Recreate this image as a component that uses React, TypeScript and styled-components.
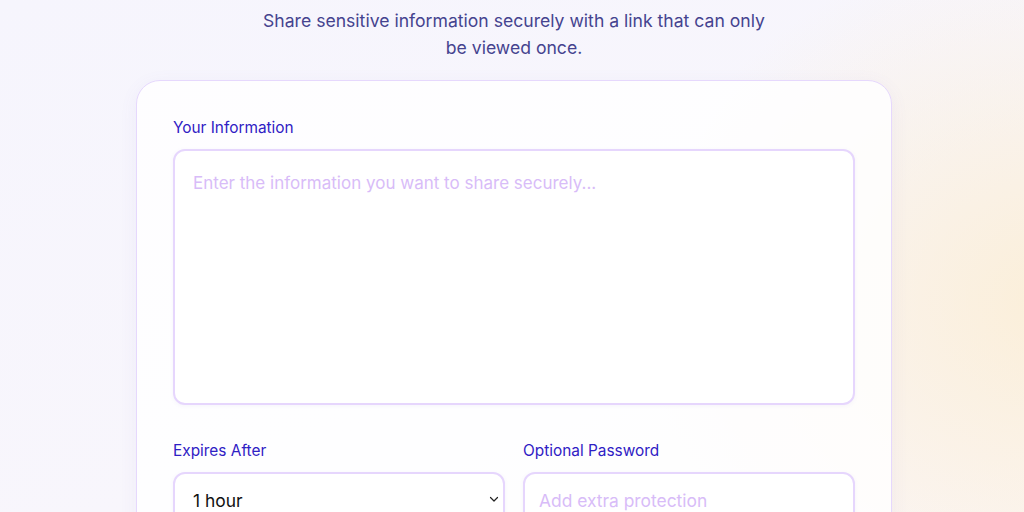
import React from "react";
import styled, { createGlobalStyle } from "styled-components";

const GlobalStyle = createGlobalStyle`
  html, body {
    margin: 0;
    padding: 0;
  }
  body {
    font-family: Inter, "Noto Sans", sans-serif;
    background:
      radial-gradient(ellipse 420px 360px at 1060px 300px, rgba(252, 236, 205, 0.75), rgba(252, 236, 205, 0) 100%),
      linear-gradient(160deg, #f6f5fd 0%, #f8f6fc 60%, #fbf6f6 100%);
    min-height: 512px;
    overflow: hidden;
  }
`;

const Page = styled.main`
  display: flex;
  flex-direction: column;
  align-items: center;
  padding: 7px 0 0 4px;
`;

const Intro = styled.p`
  margin: 0 0 19px;
  max-width: 520px;
  text-align: center;
  font-size: 17.6px;
  line-height: 27px;
  color: #45438f;
`;

const Card = styled.section`
  width: 756px;
  box-sizing: border-box;
  padding: 37px 36px 36px;
  background: rgba(255, 255, 255, 0.82);
  border: 1px solid #e6d8fd;
  border-radius: 24px;
  box-shadow: 0 4px 18px rgba(120, 100, 200, 0.07);
`;

const Field = styled.label`
  display: flex;
  flex-direction: column;
  gap: 11px;
`;

const Label = styled.span`
  font-size: 15.4px;
  line-height: 20px;
  color: #2f20c4;
`;

const fieldBox = `
  box-sizing: border-box;
  width: 100%;
  border: 2px solid #e6d6fd;
  border-radius: 12px;
  background: #fff;
  font-family: Inter, "Noto Sans", sans-serif;
  font-size: 17.4px;
  color: #111;
  outline: none;
  box-shadow: 0 1px 4px rgba(110, 90, 190, 0.06);
  &::placeholder {
    color: #d8bcf8;
  }
`;

const TextArea = styled.textarea`
  ${fieldBox}
  height: 256px;
  padding: 20px 18px;
  resize: none;
  line-height: 24px;
  font-size: 17px;
`;

const Row = styled.div`
  display: grid;
  grid-template-columns: 332px 1fr;
  gap: 18px;
  margin-top: 36px;
`;

const SelectWrap = styled.div`
  position: relative;
`;

const Select = styled.select`
  ${fieldBox}
  appearance: none;
  height: 56px;
  padding: 0 36px 0 18px;
`;

const Chevron = styled.svg`
  position: absolute;
  right: 5px;
  top: 21px;
  pointer-events: none;
`;

const Input = styled.input`
  ${fieldBox}
  height: 56px;
  padding: 0 14px;
`;

export default function App() {
  return (
    <>
      <GlobalStyle />
      <Page>
        <Intro>
          Share sensitive information securely with a link that can only be
          viewed once.
        </Intro>
        <Card>
          <Field>
            <Label>Your Information</Label>
            <TextArea placeholder="Enter the information you want to share securely..." />
          </Field>
          <Row>
            <Field>
              <Label>Expires After</Label>
              <SelectWrap>
                <Select defaultValue="1h">
                  <option value="1h">1 hour</option>
                  <option value="24h">24 hours</option>
                  <option value="7d">7 days</option>
                </Select>
                <Chevron width="12" height="12" viewBox="0 0 12 12">
                  <path d="M2.5 4.5 6 8l3.5-3.5" fill="none" stroke="#222" strokeWidth="1.2" strokeLinecap="round" strokeLinejoin="round" />
                </Chevron>
              </SelectWrap>
            </Field>
            <Field>
              <Label>Optional Password</Label>
              <Input type="password" placeholder="Add extra protection" />
            </Field>
          </Row>
        </Card>
      </Page>
    </>
  );
}
